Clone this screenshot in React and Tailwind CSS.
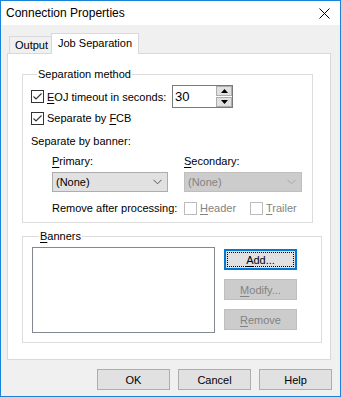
import React from "react";

function Check({ checked, disabled }) {
  return (
    <span
      className={
        disabled
          ? "w-[13px] h-[13px] border border-[#bcbcbc] bg-white flex items-center justify-center shrink-0"
          : "w-[13px] h-[13px] border border-[#333333] bg-white flex items-center justify-center shrink-0"
      }
    >
      {checked && (
        <svg width="11" height="11" viewBox="0 0 11 11">
          <path d="M1.5 5.5 L4 8 L9.5 2.5" stroke="#333333" strokeWidth="1.1" fill="none" />
        </svg>
      )}
    </span>
  );
}

function Chevron({ color }) {
  return (
    <svg width="9" height="6" viewBox="0 0 9 6">
      <path d="M0.5 0.8 L4.5 4.8 L8.5 0.8" stroke={color} strokeWidth="1" fill="none" />
    </svg>
  );
}

function Btn({ children, disabled, focused }) {
  if (focused) {
    return (
      <div className="w-[73px] h-[21px] border-2 border-[#0078d7] bg-[#e1e1e1] p-[1px] flex">
        <div className="flex-1 border border-dotted border-black flex items-center justify-center text-black">
          {children}
        </div>
      </div>
    );
  }
  return (
    <div
      className={
        disabled
          ? "w-[73px] h-[21px] border border-[#bfbfbf] bg-[#cccccc] text-[#838383] flex items-center justify-center"
          : "w-[73px] h-[21px] border border-[#adadad] bg-[#e1e1e1] text-black flex items-center justify-center"
      }
    >
      {children}
    </div>
  );
}

export default function App() {
  return (
    <div className="w-[341px] h-[397px] border border-[#1883d7] bg-[#f0f0f0] flex flex-col font-['Liberation_Sans',sans-serif] text-[11px] leading-[14px] text-black overflow-hidden whitespace-nowrap">
      {/* Title bar */}
      <div className="h-[24px] bg-white flex items-center justify-between pl-[5px] pr-[10px] shrink-0">
        <span className="text-[12px]">Connection Properties</span>
        <svg width="11" height="11" viewBox="0 0 11 11">
          <path d="M0.5 0.5 L10.5 10.5 M10.5 0.5 L0.5 10.5" stroke="#000" strokeWidth="1" />
        </svg>
      </div>

      {/* Body */}
      <div className="flex-1 flex flex-col pl-[6px] pr-[9px] pt-[8px]">
        {/* Tabs */}
        <div className="flex items-end pl-[2px]">
          <div className="w-[42px] h-[17px] border-l border-t border-[#d9d9d9] bg-[#f0f0f0] flex items-center pl-[5px]">
            Output
          </div>
          <div className="relative z-10 w-[88px] h-[21px] -mb-[1px] border-l border-t border-r border-[#d9d9d9] bg-white flex items-center pl-[6px] pb-[2px]">
            Job Separation
          </div>
        </div>

        {/* Panel */}
        <div className="w-[324px] h-[307px] border border-[#d9d9d9] bg-white flex flex-col pt-[13px]">
          {/* Separation method */}
          <fieldset className="ml-[14px] w-[291px] border border-[#dcdcdc] flex flex-col pl-[8px] pb-[6px]">
            <legend className="ml-[6px] px-[1px] leading-[14px]">Separation method</legend>
            <div className="h-[23px] mt-[4px] flex items-center">
              <Check checked />
              <span className="ml-[3px] w-[125px]">
                <u className="underline underline-offset-[2px]">E</u>OJ timeout in seconds:
              </span>
              <div className="w-[61px] h-[23px] border border-[#7a7a7a] bg-white flex items-center">
                <span className="flex-1 pl-[2px] text-[13px]">30</span>
                <div className="flex flex-col gap-[1px]">
                  <div className="w-[16px] h-[10px] border border-[#adadad] bg-[#e1e1e1] flex items-center justify-center">
                    <svg width="7" height="4" viewBox="0 0 7 4"><path d="M0 4 L3.5 0 L7 4 Z" fill="#000" /></svg>
                  </div>
                  <div className="w-[16px] h-[10px] border border-[#adadad] bg-[#e1e1e1] flex items-center justify-center">
                    <svg width="7" height="4" viewBox="0 0 7 4"><path d="M0 0 L3.5 4 L7 0 Z" fill="#000" /></svg>
                  </div>
                </div>
              </div>
            </div>
            <div className="h-[16px] mt-[2px] flex items-center">
              <Check checked />
              <span className="ml-[3px]">
                Separate by <u className="underline underline-offset-[2px]">F</u>CB
              </span>
            </div>
            <div className="h-[16px] mt-[7px] flex items-center">Separate by banner:</div>
            <div className="flex mt-[4px] ml-[21px]">
              <div className="w-[116px] flex flex-col">
                <div className="h-[16px] flex items-center">
                  <span><u className="underline underline-offset-[2px]">P</u>rimary:</span>
                </div>
                <div className="h-[20px] mt-[3px] border border-[#adadad] bg-[#e1e1e1] flex items-center justify-between pl-[3px] pr-[5px]">
                  <span>(None)</span>
                  <Chevron color="#555555" />
                </div>
              </div>
              <div className="w-[118px] ml-[16px] flex flex-col">
                <div className="h-[16px] flex items-center">
                  <span><u className="underline underline-offset-[2px]">S</u>econdary:</span>
                </div>
                <div className="h-[20px] mt-[3px] border border-[#bfbfbf] bg-[#cccccc] text-[#838383] flex items-center justify-between pl-[3px] pr-[5px]">
                  <span>(None)</span>
                  <Chevron color="#a8a8a8" />
                </div>
              </div>
            </div>
            <div className="h-[16px] mt-[8px] ml-[21px] flex items-center">
              <span className="w-[132px]">Remove after processing:</span>
              <Check disabled />
              <span className="ml-[3px] w-[50px] text-[#838383]">
                <u className="underline underline-offset-[2px]">H</u>eader
              </span>
              <Check disabled />
              <span className="ml-[3px] text-[#838383]">
                <u className="underline underline-offset-[2px]">T</u>railer
              </span>
            </div>
          </fieldset>

          {/* Banners */}
          <fieldset className="ml-[14px] mt-[6px] w-[300px] border border-[#dcdcdc] flex pl-[9px] pb-[9px]">
            <legend className="ml-[7px] px-[1px] leading-[14px]">
              <u className="underline underline-offset-[2px]">B</u>anners
            </legend>
            <div className="flex mt-[4px]">
              <div className="w-[183px] h-[86px] border border-[#828790] bg-white" />
              <div className="ml-[9px] mt-[2px] flex flex-col gap-[9px]">
                <Btn focused>
                  <span><u className="underline underline-offset-[2px]">A</u>dd...</span>
                </Btn>
                <Btn disabled>
                  <span><u className="underline underline-offset-[2px]">M</u>odify...</span>
                </Btn>
                <Btn disabled>
                  <span><u className="underline underline-offset-[2px]">R</u>emove</span>
                </Btn>
              </div>
            </div>
          </fieldset>
        </div>

        {/* Bottom buttons */}
        <div className="flex justify-end gap-[8px] mt-[9px] -mr-[1px]">
          <Btn>OK</Btn>
          <Btn>Cancel</Btn>
          <Btn>Help</Btn>
        </div>
      </div>
    </div>
  );
}
